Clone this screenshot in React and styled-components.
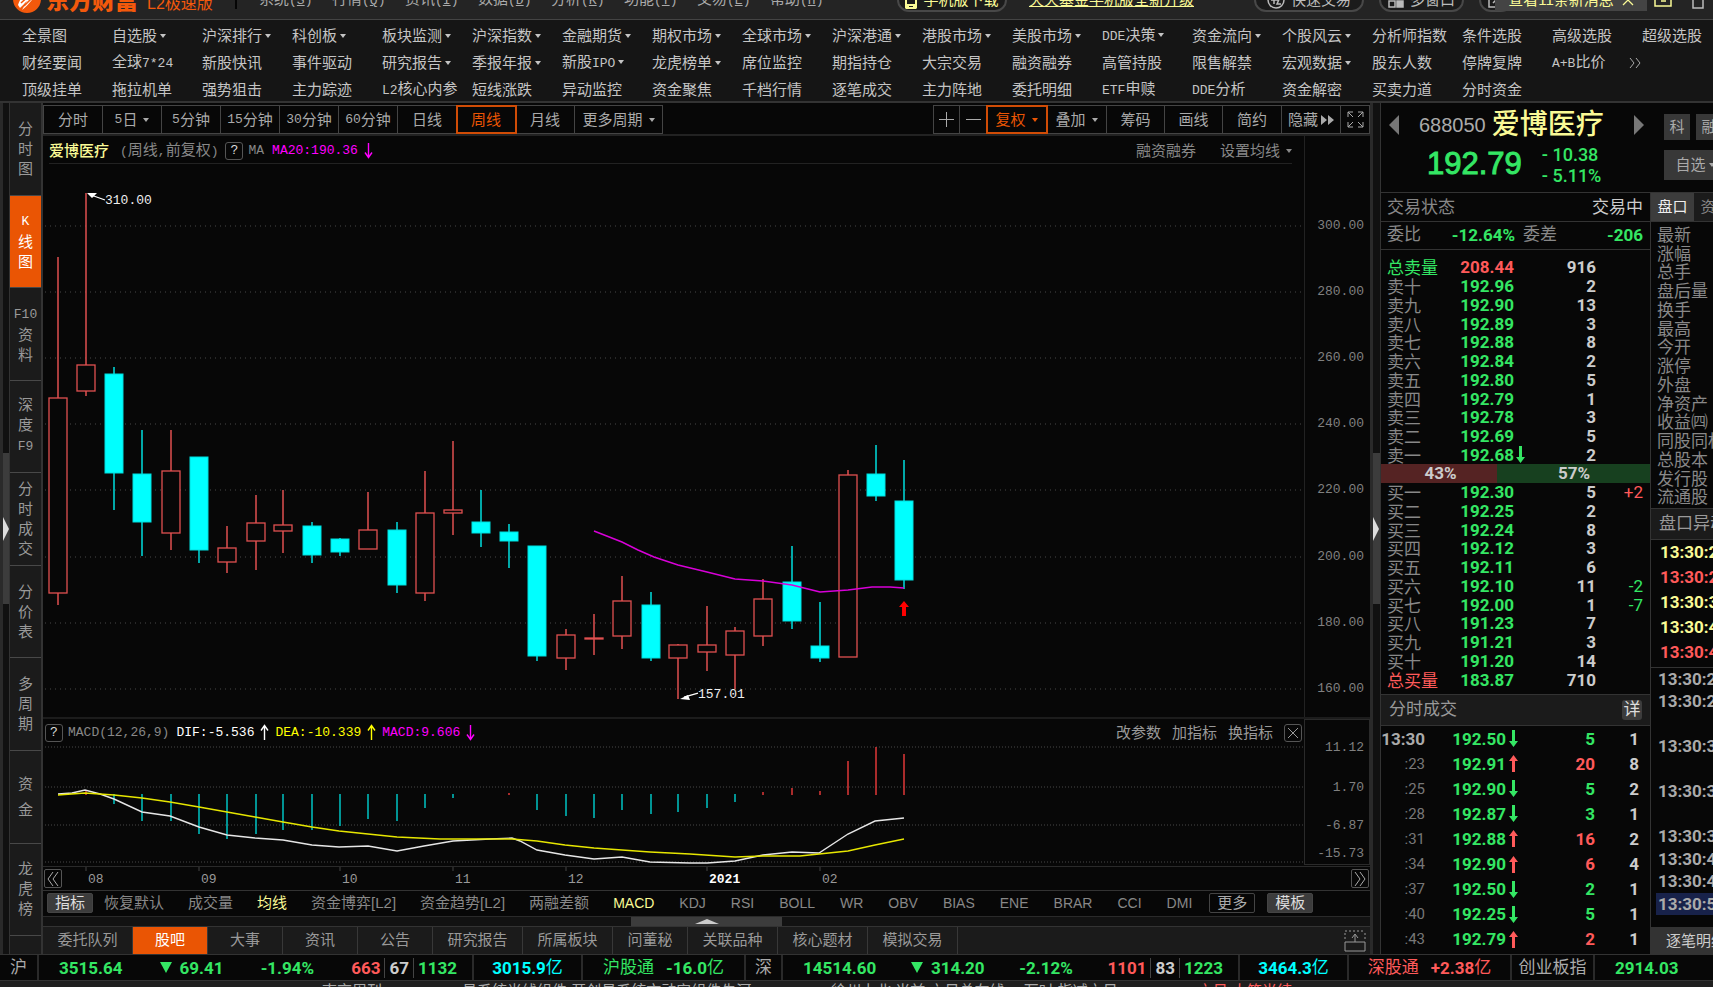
import React, { useState } from "react";
import styled, { createGlobalStyle } from "styled-components";

const CJK = `"Noto Sans CJK SC", sans-serif`;

const menuRows = [
  [
    "全景图",
    "自选股▾",
    "沪深排行▾",
    "科创板▾",
    "板块监测▾",
    "沪深指数▾",
    "金融期货▾",
    "期权市场▾",
    "全球市场▾",
    "沪深港通▾",
    "港股市场▾",
    "美股市场▾",
    "DDE决策▾",
    "资金流向▾",
    "个股风云▾",
    "分析师指数",
    "条件选股",
    "高级选股",
    "超级选股",
  ],
  [
    "财经要闻",
    "全球7*24",
    "新股快讯",
    "事件驱动",
    "研究报告▾",
    "季报年报▾",
    "新股IPO▾",
    "龙虎榜单▾",
    "席位监控",
    "期指持仓",
    "大宗交易",
    "融资融券",
    "高管持股",
    "限售解禁",
    "宏观数据▾",
    "股东人数",
    "停牌复牌",
    "A+B比价",
  ],
  [
    "顶级挂单",
    "拖拉机单",
    "强势狙击",
    "主力踪迹",
    "L2核心内参",
    "短线涨跌",
    "异动监控",
    "资金聚焦",
    "千档行情",
    "逐笔成交",
    "主力阵地",
    "委托明细",
    "ETF申赎",
    "DDE分析",
    "资金解密",
    "买卖力道",
    "分时资金",
  ],
];

const topMenu = [
  ["系统", "S"],
  ["行情", "Q"],
  ["资讯", "I"],
  ["数据", "D"],
  ["分析", "K"],
  ["功能", "T"],
  ["交易", "E"],
  ["帮助", "H"],
];

const sideTabs = [
  ["分", "时", "图"],
  ["K", "线", "图"],
  ["F10", "资", "料"],
  ["深", "度", "F9"],
  ["分", "时", "成", "交"],
  ["分", "价", "表"],
  ["多", "周", "期"],
  ["资", "金"],
  ["龙", "虎", "榜"],
];

const periods = ["分时", "5日▾", "5分钟", "15分钟", "30分钟", "60分钟", "日线", "周线", "月线", "更多周期▾"];

const indicators = ["恢复默认", "成交量", "均线", "资金博弈[L2]", "资金趋势[L2]", "两融差额", "MACD", "KDJ", "RSI", "BOLL", "WR", "OBV", "BIAS", "ENE", "BRAR", "CCI", "DMI"];

const bottomTabs = ["委托队列", "股吧", "大事", "资讯", "公告", "研究报告", "所属板块", "问董秘", "关联品种", "核心题材", "模拟交易"];

// x, high, body top, body bottom, low, rising
const candles = [
  [58, 257, 398, 593, 605, 1],
  [86, 193, 365, 391, 396, 1],
  [114, 367, 374, 473, 510, 0],
  [142, 430, 474, 522, 556, 0],
  [171, 430, 471, 533, 550, 1],
  [199, 457, 457, 550, 563, 0],
  [227, 526, 548, 562, 573, 1],
  [256, 495, 523, 541, 570, 1],
  [283, 490, 525, 531, 553, 1],
  [312, 522, 526, 555, 563, 0],
  [340, 538, 539, 552, 556, 0],
  [368, 492, 530, 549, 549, 1],
  [397, 522, 530, 585, 593, 0],
  [425, 471, 513, 593, 601, 1],
  [453, 441, 510, 513, 535, 1],
  [481, 490, 522, 533, 547, 0],
  [509, 524, 532, 541, 568, 0],
  [537, 546, 546, 656, 661, 0],
  [566, 629, 635, 658, 670, 1],
  [594, 614, 638, 639, 655, 1],
  [622, 576, 601, 636, 649, 1],
  [651, 592, 605, 658, 661, 0],
  [678, 644, 645, 658, 699, 1],
  [707, 606, 645, 652, 671, 1],
  [735, 627, 631, 655, 689, 1],
  [763, 579, 599, 636, 646, 1],
  [792, 546, 582, 621, 629, 0],
  [820, 602, 646, 658, 662, 0],
  [848, 470, 475, 657, 657, 1],
  [876, 445, 474, 496, 501, 0],
  [904, 460, 501, 580, 589, 0],
];

const priceGrid = [
  [226, "300.00"],
  [292, "280.00"],
  [358, "260.00"],
  [424, "240.00"],
  [490, "220.00"],
  [557, "200.00"],
  [623, "180.00"],
  [689, "160.00"],
];

// x, end of the bar
const macdBars = [
  [86, 791],
  [114, 805],
  [142, 822],
  [171, 822],
  [199, 835],
  [227, 840],
  [256, 835],
  [283, 831],
  [312, 831],
  [340, 827],
  [368, 820],
  [397, 822],
  [425, 809],
  [453, 799],
  [509, 794],
  [537, 811],
  [566, 817],
  [594, 819],
  [622, 811],
  [651, 815],
  [678, 813],
  [707, 809],
  [735, 803],
  [763, 793],
  [792, 789],
  [820, 792],
  [848, 762],
  [876, 748],
  [904, 755],
];

const maLine =
  "594,531 622,542 638,550 654,557 678,565 707,572 735,579 763,581 792,585 820,592 848,590 872,587 890,587 904,588";
const difLine =
  "58,795 72,794 85,791 100,795 114,800 142,813 170,817 199,828 227,836 255,839 283,841 312,846 339,848 368,847 397,852 424,847 453,842 490,840 512,839 520,842 537,851 565,856 594,860 622,858 650,863 690,864 707,864 735,862 763,856 792,853 819,854 848,835 875,822 904,819";
const deaLine =
  "58,796 85,794 114,796 142,799 170,803 199,808 227,813 255,818 283,823 312,828 339,832 368,835 397,838 440,840 512,840 537,842 565,846 594,849 650,853 690,855 735,858 763,857 800,857 819,855 848,852 875,846 904,840";

const dates = [
  [86, "08"],
  [199, "09"],
  [340, "10"],
  [453, "11"],
  [566, "12"],
  [707, "2021"],
  [820, "02"],
];

const sells = [
  ["总卖量", "208.44", "916"],
  ["卖十", "192.96", "2"],
  ["卖九", "192.90", "13"],
  ["卖八", "192.89", "3"],
  ["卖七", "192.88", "8"],
  ["卖六", "192.84", "2"],
  ["卖五", "192.80", "5"],
  ["卖四", "192.79", "1"],
  ["卖三", "192.78", "3"],
  ["卖二", "192.69", "5"],
  ["卖一", "192.68", "2"],
];

const buys = [
  ["买一", "192.30", "5", "+2"],
  ["买二", "192.25", "2"],
  ["买三", "192.24", "8"],
  ["买四", "192.12", "3"],
  ["买五", "192.11", "6"],
  ["买六", "192.10", "11", "-2"],
  ["买七", "192.00", "1", "-7"],
  ["买八", "191.23", "7"],
  ["买九", "191.21", "3"],
  ["买十", "191.20", "14"],
  ["总买量", "183.87", "710"],
];

const ticks = [
  ["13:30", "192.50", 0, "5", "1"],
  [":23", "192.91", 1, "20", "8"],
  [":25", "192.90", 0, "5", "2"],
  [":28", "192.87", 0, "3", "1"],
  [":31", "192.88", 1, "16", "2"],
  [":34", "192.90", 1, "6", "4"],
  [":37", "192.50", 0, "2", "1"],
  [":40", "192.25", 0, "5", "1"],
  [":43", "192.79", 1, "2", "1"],
];

const quoteLabels = ["最新", "涨幅", "总手", "盘后量", "换手", "最高", "今开", "涨停", "外盘", "净资产", "收益㈣", "同股同权", "总股本", "发行股", "流通股"];

const alerts = [
  ["13:30:2", "#fafa96"],
  ["13:30:2", "#ff5a5a"],
  ["13:30:3", "#fafa96"],
  ["13:30:4", "#fafa96"],
  ["13:30:4", "#ff5a5a"],
];

const trades = ["13:30:2", "13:30:2", "", "13:30:3", "", "13:30:3", "", "13:30:3", "13:30:4", "13:30:4", "13:30:5"];

// Latin runs are set in the half width face, ▾ becomes a small caret
function Mixed({ children }) {
  return children.split(/([\x21-\x7e]+|▾)/).map((part, i) => {
    if (part === "▾") return <Caret key={i} />;
    return i % 2 ? <Half key={i}>{part}</Half> : part;
  });
}

function ThinArrow({ up, color }) {
  return (
    <svg width="9" height="17" viewBox="0 0 9 17" fill="none" stroke={color} strokeWidth="1.4">
      <path d={up ? "M4.500 16V2M1 6.500L4.500 1.500L8 6.500" : "M4.500 1V15M1 10.500L4.500 15.500L8 10.500"} />
    </svg>
  );
}

function PriceArrow({ up }) {
  return (
    <svg width="9" height="17" viewBox="0 0 9 17" fill={up ? "#ff5a5a" : "#34e664"}>
      <path d={up ? "M4.500 0L9 6H6V17H3V6H0Z" : "M4.500 17L9 11H6V0H3V11H0Z"} />
    </svg>
  );
}

function TitleBar() {
  return (
    <TitleBarStyle>
      <div className="inner">
        <svg className="logo" width="28" height="28" viewBox="0 0 28 28">
          <circle cx="14" cy="14" r="14" fill="#f3590c" />
          <path d="M5 20C7 13 11 9 19 3L22 7L24 9C19 14 16 20 9 25C12 20 13 18 14 16C11 19 9 21 7 23Z" fill="#fff" />
          <path d="M8 18L19 8M11 21L21 11" stroke="#f3590c" strokeWidth="1.5" />
        </svg>
        <strong className="brand">东方财富</strong>
        <span className="edition">L2极速版</span>
        <i className="split" />
        <nav>
          {topMenu.map(([text, key]) => (
            <button key={key}>
              {text}
              <Half>
                (<u>{key}</u>)
              </Half>
            </button>
          ))}
        </nav>
        <div className="tools">
          <Pill $yellow $width={110}>
            <svg width="12" height="18" viewBox="0 0 12 18" fill="#fafa96">
              <path fillRule="evenodd" d="M1 0H11L12 1V17L11 18H1L0 17V1ZM2 2V13H10V2ZM4 15V16H8V15Z" />
            </svg>
            手机版下载
          </Pill>
          <a href="#fund">天天基金手机版全新升级</a>
          <Pill $width={110}>
            <svg width="18" height="18" viewBox="0 0 18 18" fill="none" stroke="#bbb" strokeWidth="1.5">
              <circle cx="9" cy="9" r="8" />
              <path d="M4 9H11M7 5V13M13 6L10 13H14" />
            </svg>
            快速交易
          </Pill>
          <Pill $width={85}>
            <svg width="16" height="16" viewBox="0 0 16 16" fill="none" stroke="#bbb" strokeWidth="1.5">
              <path d="M1 1H7V7H1ZM1 9H7V15H1Z" />
              <path d="M9 1H15V7H9ZM9 9H15V15H9Z" fill="#bbb" />
            </svg>
            多窗口
          </Pill>
          <Pill $width={34}>
            <svg width="16" height="16" viewBox="0 0 16 16" fill="none" stroke="#bbb" strokeWidth="1.5">
              <path d="M8 1H1V15H8M5 11L14 2" />
            </svg>
          </Pill>
          <button className="news">
            查看11条新消息
            <svg width="12" height="12" viewBox="0 0 12 12" stroke="#fafa96" strokeWidth="1.3">
              <path d="M1 1L11 11M11 1L1 11" />
            </svg>
          </button>
          <svg className="box_icon" width="18" height="18" viewBox="0 0 18 18" fill="none" stroke="#fafa96" strokeWidth="1.5">
            <path d="M1 1H17V17H1ZM7 12H12" />
          </svg>
          <svg className="up_icon" width="20" height="20" viewBox="0 0 20 20" fill="none" stroke="#bbb" strokeWidth="1.5">
            <path d="M10 1L19 10H15V19H5V10H1Z" />
          </svg>
        </div>
      </div>
    </TitleBarStyle>
  );
}

function PriceChart() {
  return (
    <PlotRow>
      <svg className="plot" width="100%" height="100%">
        <g transform="translate(-43 -164)">
          {priceGrid.map(([y]) => (
            <line key={y} x1="45" x2="1303" y1={y} y2={y} className="grid" />
          ))}
          {candles.map(([x, high, top, bottom, low, rising]) => (
            <g key={x} stroke={rising ? "#e05050" : "#00dede"} fill={rising ? "#070707" : "#00ffff"}>
              <path d={`M${x} ${high}V${top}M${x} ${bottom}V${low}`} strokeWidth="1.5" />
              <rect x={x - 9} y={top} width="18" height={bottom - top} strokeWidth={rising ? 1.3 : 1} />
            </g>
          ))}
          <polyline points={maLine} fill="none" stroke="#d800d8" strokeWidth="1.5" />
          <path d="M904 601L909 607H906V616H902V607H899Z" fill="#f00" />
          <path d="M91 195L105 200M684 697L698 693" stroke="#fff" strokeWidth="1.3" />
          <path d="M87 193L97 193L92 198ZM680 699L688 695L690 700Z" fill="#fff" />
          <text x="105" y="204">310.00</text>
          <text x="698" y="698">157.01</text>
        </g>
      </svg>
      <svg className="axis" width="66" height="100%">
        {priceGrid.map(([y, label]) => (
          <text key={y} x="59" y={y - 161} textAnchor="end">
            {label}
          </text>
        ))}
      </svg>
    </PlotRow>
  );
}

function MacdChart() {
  return (
    <MacdStyle>
      <div className="head">
        <HelpBox>?</HelpBox>
        <Half className="grey">MACD(12,26,9)</Half>
        <Half className="white">DIF:-5.536</Half>
        <ThinArrow up color="#fff" />
        <Half className="yellow">DEA:-10.339</Half>
        <ThinArrow up color="#ff0" />
        <Half className="magenta">MACD:9.606</Half>
        <ThinArrow color="#f0f" />
        <div className="actions">
          <button>改参数</button>
          <button>加指标</button>
          <button>换指标</button>
          <button className="close" aria-label="关闭">
            <svg width="10" height="12" viewBox="0 0 10 12" stroke="#999">
              <path d="M0 1L10 11M10 1L0 11" />
            </svg>
          </button>
        </div>
      </div>
      <svg className="plot" width="100%" height="147">
        <g transform="translate(-43 -720)">
          {[748, 788, 826, 863].map((y) => (
            <line key={y} x1="45" x2="1303" y1={y} y2={y} className="grid" />
          ))}
          {macdBars.map(([x, end]) => (
            <line key={x} x1={x} x2={x} y1={end < 795 ? 796 : 795} y2={end} stroke={end < 795 ? "#e03838" : "#00c4c4"} strokeWidth="1.5" />
          ))}
          <polyline points={difLine} fill="none" stroke="#e6e6e6" strokeWidth="1.4" />
          <polyline points={deaLine} fill="none" stroke="#e6e600" strokeWidth="1.4" />
        </g>
      </svg>
      <svg className="axis" width="66" height="146">
        <text x="59" y="31" textAnchor="end">11.12</text>
        <text x="59" y="71" textAnchor="end">1.70</text>
        <text x="59" y="109" textAnchor="end">-6.87</text>
        <text x="59" y="137" textAnchor="end">-15.73</text>
      </svg>
    </MacdStyle>
  );
}

function OrderRow({ row, totalColor, priceColor = "#34e664", arrow }) {
  const [label, price, volume, diff] = row;
  return (
    <tr>
      <td className="label" style={{ color: totalColor }}>
        {label}
      </td>
      <td className="price" style={{ color: priceColor }}>
        {price}
      </td>
      <td className="arrow">{arrow && <PriceArrow />}</td>
      <td className="volume">{volume}</td>
      <td className={`diff ${diff && diff[0] === "+" ? "up" : ""}`}>{diff}</td>
    </tr>
  );
}

function QuotePanel() {
  return (
    <QuoteStyle>
      <header>
        <button className="prev" aria-label="上一只" />
        <div className="stock">
          <div className="title">
            <span className="code">688050</span>
            <h1>爱博医疗</h1>
          </div>
          <div className="now">
            <span className="last">192.79</span>
            <span className="change">
              <span>- 10.38</span>
              <span>- 5.11%</span>
            </span>
          </div>
        </div>
        <button className="next" aria-label="下一只" />
        <div className="tags">
          <button className="tag">科</button>
          <button className="tag">融</button>
          <button className="fav">
            <Mixed>自选▾</Mixed>
          </button>
        </div>
      </header>
      <div className="columns">
        <div className="book_column">
          <div className="status">
            <span>交易状态</span>
            <b>交易中</b>
          </div>
          <div className="ratio">
            <span>委比</span>
            <Num className="first">-12.64%</Num>
            <span>委差</span>
            <Num className="second">-206</Num>
          </div>
          <OrderBook>
            <tbody>
              {sells.map((row, i) => (
                <OrderRow
                  key={row[0]}
                  row={row}
                  totalColor={i === 0 ? "#34e664" : undefined}
                  priceColor={i === 0 ? "#ff5a5a" : undefined}
                  arrow={i === 10}
                />
              ))}
              <tr className="power">
                <td>43%</td>
                <td>57%</td>
              </tr>
              {buys.map((row, i) => (
                <OrderRow key={row[0]} row={row} totalColor={i === 10 ? "#ff5a5a" : undefined} />
              ))}
            </tbody>
          </OrderBook>
          <SectionHead>
            分时成交<button>详</button>
          </SectionHead>
          <TickTable>
            <tbody>
              {ticks.map(([time, price, up, volume, count], i) => (
                <tr key={time}>
                  <td className={i ? "time" : "time full"}>{time}</td>
                  <td className="price">{price}</td>
                  <td className="arrow">
                    <PriceArrow up={up} />
                  </td>
                  <td className={`volume ${up ? "up" : ""}`}>{volume}</td>
                  <td className="count">{count}</td>
                </tr>
              ))}
            </tbody>
          </TickTable>
        </div>
        <div className="info_column">
          <div className="tabs">
            <button className="active">盘口</button>
            <button>资金</button>
          </div>
          <ul className="labels">
            {quoteLabels.map((item) => (
              <li key={item}>{item}</li>
            ))}
          </ul>
          <SectionHead>盘口异动</SectionHead>
          <ul className="alerts">
            {alerts.map(([time, color], i) => (
              <li key={i} style={{ color }}>
                {time}
              </li>
            ))}
          </ul>
          <ul className="trades">
            {trades.map((time, i) => (
              <li key={i} className={i === trades.length - 1 ? "selected" : ""}>
                {time}
              </li>
            ))}
          </ul>
          <button className="detail">逐笔明细</button>
        </div>
      </div>
    </QuoteStyle>
  );
}

function MarketCells({ name, index, change, percent, counts, amount, connect, flow, up }) {
  return (
    <>
      <Cell $width={name === "沪" ? 39 : 37}>{name}</Cell>
      <Cell $width={name === "沪" ? 435 : 457} $spread>
        <Num>{index}</Num>
        <Num className="drop">
          <i />
          {change}
        </Num>
        <Num>{percent}</Num>
        <Num className="counts">
          <span className="up">{counts[0]}</span>
          <span className="flat">{counts[1]}</span>
          <span>{counts[2]}</span>
        </Num>
      </Cell>
      <Cell $width={109} $color="#00ffff">
        <Num>{amount}</Num>亿
      </Cell>
      <Cell $width={163} $color={up ? "#ff5a5a" : "#34e664"}>
        {connect}
        <Num className="flow">{flow}</Num>亿
      </Cell>
    </>
  );
}

function App() {
  const [period, setPeriod] = useState("周线");
  const [side, setSide] = useState(1);
  const [tab, setTab] = useState("股吧");

  return (
    <Page>
      <GlobalStyle />
      <TitleBar />
      <MenuGrid>
        {menuRows.map((row, i) => (
          <div className="menu_row" key={i}>
            {row.map((item) => (
              <button key={item}>
                <Mixed>{item}</Mixed>
              </button>
            ))}
            {i === 1 && (
              <button className="more" aria-label="更多">
                <svg width="12" height="10" viewBox="0 0 12 10" fill="none" stroke="#aaa">
                  <path d="M1 0L5 5L1 10M7 0L11 5L7 10" />
                </svg>
              </button>
            )}
          </div>
        ))}
      </MenuGrid>
      <Main>
        <Rail $width={10}>
          <i className="thumb" />
        </Rail>
        <SideBar>
          {sideTabs.map((chars, i) => (
            <SideTab key={i} $active={side === i} $wide={chars.length === 2} onClick={() => setSide(i)}>
              {chars.map((c) => (
                <span key={c}>
                  <Mixed>{c}</Mixed>
                </span>
              ))}
            </SideTab>
          ))}
          <div className="rest" />
        </SideBar>
        <ChartPanel>
          <Toolbar>
            <div className="group">
              {periods.map((item) => (
                <ToolButton
                  key={item}
                  $width={item === "更多周期▾" ? 87 : 59}
                  $active={period === item}
                  onClick={() => setPeriod(item)}
                >
                  <Mixed>{item}</Mixed>
                </ToolButton>
              ))}
            </div>
            <div className="group">
              <ToolButton $width={26} aria-label="放大">
                <svg width="15" height="15" viewBox="0 0 15 15" stroke="#aaa">
                  <path d="M0 7.500H15M7.500 0V15" />
                </svg>
              </ToolButton>
              <ToolButton $width={27} aria-label="缩小">
                <svg width="15" height="15" viewBox="0 0 15 15" stroke="#aaa">
                  <path d="M0 7.500H15" />
                </svg>
              </ToolButton>
              <ToolButton $width={60} $active>
                <Mixed>复权▾</Mixed>
              </ToolButton>
              <ToolButton $width={60}>
                <Mixed>叠加▾</Mixed>
              </ToolButton>
              <ToolButton $width={58}>筹码</ToolButton>
              <ToolButton $width={58}>画线</ToolButton>
              <ToolButton $width={59}>简约</ToolButton>
              <ToolButton $width={59}>
                隐藏
                <svg className="after" width="13" height="10" viewBox="0 0 13 10" fill="#aaa">
                  <path d="M0 0L6 5L0 10ZM7 0L13 5L7 10Z" />
                </svg>
              </ToolButton>
              <ToolButton $width={28} aria-label="全屏">
                <svg width="17" height="17" viewBox="0 0 17 17" fill="none" stroke="#aaa">
                  <path d="M1 6V1H6M11 1H16V6M16 11V16H11M6 16H1V11M1 1L6 6M16 1L11 6M16 16L11 11M1 16L6 11" />
                </svg>
              </ToolButton>
            </div>
          </Toolbar>
          <ChartHead>
            <div className="title">
              <strong>爱博医疗</strong>
              <span className="mode">
                <Mixed>(周线,前复权)</Mixed>
              </span>
              <HelpBox>?</HelpBox>
              <Half className="ma">MA</Half>
              <Half className="ma20">MA20:190.36</Half>
              <ThinArrow color="#f0f" />
              <div className="links">
                <button>融资融券</button>
                <button>
                  <Mixed>设置均线▾</Mixed>
                </button>
              </div>
            </div>
            <div className="axis_head" />
          </ChartHead>
          <PriceChart />
          <MacdChart />
          <DateAxis>
            <button aria-label="向前">
              <svg width="12" height="14" viewBox="0 0 12 14" fill="none" stroke="#aaa">
                <path d="M6 0L1 7L6 14M11 0L6 7L11 14" />
              </svg>
            </button>
            <svg className="scale" height="23">
              <g transform="translate(-62 0)">
                {dates.map(([x, label]) => (
                  <g key={x}>
                    <path d={`M${x} 0V4`} stroke="#444" />
                    <text x={x + 2} y="16" className={label === "2021" ? "year" : ""}>
                      {label}
                    </text>
                  </g>
                ))}
              </g>
            </svg>
            <button aria-label="向后">
              <svg width="12" height="14" viewBox="0 0 12 14" fill="none" stroke="#aaa">
                <path d="M1 0L6 7L1 14M6 0L11 7L6 14" />
              </svg>
            </button>
          </DateAxis>
          <IndicatorBar>
            <button className="solid">指标</button>
            <div className="items">
              {indicators.map((item) => (
                <IndicatorButton key={item} $latin={/^[A-Z]+$/.test(item)} $active={item === "均线" || item === "MACD"}>
                  {item}
                </IndicatorButton>
              ))}
            </div>
            <button className="outline">更多</button>
            <button className="solid">模板</button>
          </IndicatorBar>
          <ScrollStrip>
            <div className="thumb">
              <i />
            </div>
          </ScrollStrip>
          <BottomTabs>
            {bottomTabs.map((item) => (
              <BottomTab key={item} $active={tab === item} $width={item.length > 3 ? 90 : 75} onClick={() => setTab(item)}>
                {item}
              </BottomTab>
            ))}
            <svg width="22" height="22" viewBox="0 0 22 22" fill="none" stroke="#999">
              <path d="M1 1H21M1 3V11M21 3V11" strokeDasharray="2 2" />
              <path d="M1 12H21V21H1ZM11 12V5M8 8L11 4L14 8" />
            </svg>
          </BottomTabs>
        </ChartPanel>
        <Rail $width={11}>
          <i className="thumb" />
        </Rail>
        <QuotePanel />
      </Main>
      <Ticker>
        <MarketCells name="沪" index="3515.64" change="69.41" percent="-1.94%" counts={[663, 67, 1132]} amount="3015.9" connect="沪股通" flow="-16.0" />
        <MarketCells name="深" index="14514.60" change="314.20" percent="-2.12%" counts={[1101, 83, 1223]} amount="3464.3" connect="深股通" flow="+2.38" up />
        <Cell $width={83}>创业板指</Cell>
        <Cell className="last">
          <Num>2914.03</Num>
        </Cell>
      </Ticker>
      <NewsStrip>
        <span>南京周刊</span>
        <span>易系统光线组件 开创易系统市动安组件先河</span>
        <span>徐州上北 当前 六日总在线 一万时 指减六日</span>
        <span className="red">六日 大笔当结</span>
      </NewsStrip>
    </Page>
  );
}

const GlobalStyle = createGlobalStyle`
  * {
    box-sizing: border-box;
  }
  body {
    margin: 0;
    background-color: #070707;
    color: #aaa;
    font-family: "Liberation Sans", ${CJK};
    font-size: 15px;
    line-height: 20px;
  }
  button {
    background: none;
    border: none;
    padding: 0;
    color: inherit;
    font: inherit;
    cursor: pointer;
    white-space: nowrap;
  }
  ul {
    margin: 0;
    padding: 0;
    list-style: none;
  }
  table {
    border-collapse: collapse;
  }
  td {
    padding: 0;
  }
  text {
    font-family: "Liberation Mono", monospace;
    font-size: 13px;
  }
`;

const Page = styled.div`
  height: 100vh;
  display: flex;
  flex-direction: column;
  overflow: hidden;
`;

const Half = styled.span`
  font-family: "Liberation Mono", monospace;
  font-size: 13px;
`;

const Num = styled.span`
  font-family: Roboto, sans-serif;
  font-size: 17px;
  font-weight: 700;
  color: #34e664;
`;

const Caret = styled.i`
  display: inline-block;
  margin-left: 3px;
  vertical-align: 3px;
  border: 3px solid transparent;
  border-top: 4px solid currentColor;
  border-bottom: none;
`;

const HelpBox = styled.button`
  width: 18px;
  height: 18px;
  border: 1px solid #555;
  border-radius: 3px;
  color: #ddd;
  font-family: "Liberation Mono", monospace;
  font-size: 13px;
  line-height: 16px;
`;

const Pill = styled.button`
  display: flex;
  align-items: center;
  justify-content: center;
  gap: 6px;
  width: ${({ $width }) => $width}px;
  height: 24px;
  border: 2px solid #484848;
  border-radius: 12px;
  background-color: #1b1b1b;
  color: ${({ $yellow }) => ($yellow ? "#fafa96" : "#bbb")};
`;

const TitleBarStyle = styled.div`
  display: flex;
  align-items: flex-end;
  flex: none;
  height: 20px;
  overflow: hidden;
  background-color: #242424;
  border-bottom: 1px solid #444;
  .inner {
    display: flex;
    align-items: center;
    width: 100%;
    height: 38px;
    padding-left: 13px;
  }
  .logo {
    margin-bottom: 2px;
  }
  .brand {
    margin-left: 5px;
    padding-top: 2px;
    color: #f3590c;
    font-size: 23px;
    font-weight: 900;
  }
  .edition {
    margin-left: 9px;
    padding-top: 8px;
    width: 68px;
    color: #f3590c;
    font-size: 16px;
    white-space: nowrap;
  }
  .split {
    height: 18px;
    margin-left: 20px;
    border-left: 2px solid #050505;
  }
  nav {
    display: flex;
    margin-left: 22px;
    button {
      width: 73px;
      text-align: left;
    }
  }
  .tools {
    display: flex;
    align-items: center;
    margin-left: auto;
    padding-right: 5px;
    a {
      margin: 0 60px 0 22px;
      color: #fafa96;
      white-space: nowrap;
    }
    ${Pill} + ${Pill} {
      margin-left: 15px;
    }
  }
  .news {
    display: flex;
    align-items: center;
    justify-content: center;
    gap: 8px;
    width: 152px;
    height: 22px;
    margin-left: -18px;
    background-color: #444;
    color: #fafa96;
  }
  .box_icon {
    margin: 0 0 4px 7px;
  }
  .up_icon {
    margin: 0 0 2px 16px;
  }
`;

const MenuGrid = styled.nav`
  flex: none;
  display: grid;
  grid-template-rows: 26px 27px 27px;
  height: 83px;
  padding: 2px 0 0 22px;
  background-color: #151515;
  border-bottom: 2px solid #333;
  color: #c4c4c4;
  .menu_row {
    display: flex;
    align-items: center;
    padding-top: 2px;
    button {
      flex: 1 0 90px;
      max-width: 90px;
      text-align: left;
    }
    .more {
      margin-left: -13px;
    }
  }
`;

const Main = styled.main`
  display: flex;
  flex: 1;
  min-height: 0;
`;

const Rail = styled.div`
  flex: none;
  display: flex;
  align-items: center;
  width: ${({ $width }) => $width}px;
  background-color: #111;
  border-left: 3px solid #2a2a2a;
  border-right: 1px solid #333;
  .thumb {
    display: flex;
    align-items: center;
    width: 100%;
    height: 151px;
    background-color: #3c3c3c;
    &::before {
      content: "";
      border: 12px solid transparent;
      border-left: 6px solid #ddd;
      border-right: none;
    }
  }
`;

const SideBar = styled.nav`
  flex: none;
  display: flex;
  flex-direction: column;
  width: 33px;
  background-color: #1b1b1b;
  border-right: 2px solid #333;
  .rest {
    height: 18px;
  }
`;

const SideTab = styled.button`
  flex: 1;
  display: flex;
  flex-direction: column;
  align-items: center;
  justify-content: center;
  gap: ${({ $wide }) => ($wide ? 6 : 0)}px;
  border-bottom: 1px solid #484848;
  background-color: ${({ $active }) => ($active ? "#ea5504" : "transparent")};
  color: ${({ $active }) => ($active ? "#fff" : "#999")};
`;

const ChartPanel = styled.section`
  flex: 1;
  display: flex;
  flex-direction: column;
  min-width: 0;
`;

const Toolbar = styled.div`
  display: flex;
  justify-content: space-between;
  height: 33px;
  padding-top: 2px;
  border-bottom: 2px solid #222;
  .group {
    display: flex;
    height: 29px;
    border: 1px solid #444;
  }
`;

const ToolButton = styled.button`
  width: ${({ $width }) => $width}px;
  display: flex;
  align-items: center;
  justify-content: center;
  border-right: 1px solid #444;
  color: #aaa;
  white-space: nowrap;
  .after {
    margin-left: 3px;
  }
  ${Caret} {
    margin-left: 6px;
  }
  &:last-child {
    border-right: none;
  }
  ${({ $active }) =>
    $active &&
    `
    outline: 2px solid #d04c06;
    outline-offset: -1px;
    color: #ea5504;
  `}
`;

const ChartHead = styled.div`
  display: grid;
  grid-template-columns: minmax(0, 1fr) 66px;
  .title {
    display: flex;
    align-items: center;
    height: 28px;
    padding-top: 2px;
    margin: 0 12px 0 6px;
    border-bottom: 1px solid #222;
  }
  .axis_head {
    border-left: 1px solid #222;
  }
  strong {
    color: #fafa96;
    font-weight: 500;
  }
  .mode {
    margin: 0 7px 0 11px;
    color: #888;
  }
  .ma {
    margin: 0 8px 0 5px;
    color: #888;
  }
  .ma20 {
    margin-right: 6px;
    color: #f0f;
  }
  .links {
    display: flex;
    gap: 24px;
    margin-left: auto;
    color: #888;
    ${Caret} {
      margin-left: 6px;
    }
  }
`;

const PlotRow = styled.div`
  flex: 1;
  display: grid;
  grid-template-columns: minmax(0, 1fr) 66px;
  min-height: 0;
  border-bottom: 2px solid #1c1c1c;
  .grid {
    stroke: #484848;
    stroke-dasharray: 1 4;
  }
  .plot text {
    fill: #eee;
  }
  .axis {
    border-left: 1px solid #222;
    text {
      fill: #808080;
    }
  }
`;

const MacdStyle = styled.div`
  display: grid;
  grid-template-columns: minmax(0, 1fr) 66px;
  height: 148px;
  border-bottom: 1px solid #2a2a2a;
  .head,
  .plot {
    grid-area: 1 / 1;
  }
  .head {
    display: flex;
    align-items: center;
    align-self: start;
    height: 27px;
    padding-left: 2px;
    white-space: nowrap;
    > svg {
      margin: 0 6px;
    }
  }
  .grey {
    margin: 0 7px 0 5px;
    color: #888;
  }
  .white {
    color: #fff;
  }
  .yellow {
    color: #ff0;
  }
  .magenta {
    color: #f0f;
  }
  .actions {
    display: flex;
    align-items: center;
    gap: 11px;
    margin-left: auto;
    padding-right: 2px;
    color: #999;
  }
  .close {
    display: flex;
    align-items: center;
    justify-content: center;
    width: 18px;
    height: 18px;
    border: 1px solid #555;
    border-radius: 3px;
  }
  .grid {
    stroke: #484848;
    stroke-dasharray: 1 2;
  }
  .axis {
    border: 1px solid #2a2a2a;
    text {
      fill: #808080;
    }
  }
`;

const DateAxis = styled.div`
  display: flex;
  align-items: center;
  height: 24px;
  padding: 0 1px;
  border-bottom: 1px solid #333;
  .scale {
    flex: 1;
    align-self: flex-start;
  }
  text {
    fill: #999;
  }
  .year {
    fill: #fff;
    font-weight: 700;
  }
  button {
    display: flex;
    align-items: center;
    justify-content: center;
    width: 18px;
    height: 19px;
    border: 1px solid #555;
    border-radius: 2px;
  }
`;

const IndicatorBar = styled.div`
  display: flex;
  align-items: center;
  height: 26px;
  padding: 0 0 1px 4px;
  border-bottom: 1px solid #2a2a2a;
  color: #888;
  .items {
    display: flex;
    gap: 24px;
    margin: 0 16px 0 11px;
  }
  .solid,
  .outline {
    width: 46px;
    height: 20px;
    line-height: 18px;
    border-radius: 2px;
    border: 1px solid #444;
    color: #ddd;
  }
  .solid {
    background-color: #3c3c3c;
  }
  .outline {
    margin-right: 12px;
    color: #aaa;
  }
`;

const IndicatorButton = styled.button`
  color: ${({ $active }) => ($active ? "#fafa96" : "inherit")};
  ${({ $latin }) =>
    $latin &&
    `
    padding-right: 1px;
    font-size: 14px;
  `}
`;

const ScrollStrip = styled.div`
  display: flex;
  justify-content: center;
  height: 9px;
  background-color: #121212;
  .thumb {
    display: flex;
    align-items: center;
    justify-content: center;
    width: 151px;
    background-color: #3c3c3c;
  }
  i {
    border: 12px solid transparent;
    border-bottom: 5px solid #ccc;
    border-top: none;
  }
`;

const BottomTabs = styled.nav`
  display: flex;
  align-items: center;
  height: 28px;
  background-color: #1b1b1b;
  border-top: 1px solid #333;
  svg {
    margin: 0 4px 0 auto;
  }
`;

const BottomTab = styled.button`
  width: ${({ $width }) => $width}px;
  height: 100%;
  padding-bottom: 2px;
  border-right: 1px solid #383838;
  background-color: ${({ $active }) => ($active ? "#ea5504" : "transparent")};
  color: ${({ $active }) => ($active ? "#fff" : "#999")};
`;

const SectionHead = styled.div`
  flex: none;
  display: flex;
  align-items: center;
  justify-content: space-between;
  height: 32px;
  padding: 0 8px;
  background-color: #1b1b1b;
  border-top: 1px solid #333;
  border-bottom: 1px solid #333;
  color: #999;
  font-size: 17px;
  white-space: nowrap;
  button {
    width: 20px;
    height: 20px;
    border-radius: 3px;
    background-color: #3c3c3c;
    color: #ddd;
  }
`;

const OrderBook = styled.table`
  flex: 1;
  display: flex;
  min-height: 0;
  padding: 8px 0 5px;
  tbody {
    flex: 1;
    display: flex;
    flex-direction: column;
  }
  tr {
    flex: 1;
    display: flex;
    align-items: center;
    min-height: 0;
    padding: 0 7px 0 6px;
  }
  td {
    font-family: Roboto, ${CJK};
    font-size: 17px;
    font-weight: 700;
    line-height: 18px;
    text-align: right;
    color: #ccc;
  }
  .label {
    width: 60px;
    color: #888;
    font-family: ${CJK};
    font-weight: 400;
    text-align: left;
  }
  .price {
    width: 67px;
  }
  .arrow {
    display: flex;
    width: 11px;
    padding-left: 2px;
  }
  .volume {
    width: 71px;
  }
  .diff {
    flex: 1;
    color: #34e664;
    font-weight: 400;
    &.up {
      color: #ff5a5a;
    }
  }
  .power {
    padding: 0;
    align-items: stretch;
    td {
      width: 57%;
      padding-right: 60px;
      background-color: #17401f;
    }
    td:first-child {
      width: 43%;
      padding-right: 40px;
      background-color: #552323;
    }
  }
`;

const TickTable = styled.table`
  display: flex;
  height: 228px;
  padding-bottom: 2px;
  tbody {
    flex: 1;
    display: flex;
    flex-direction: column;
  }
  tr {
    flex: 1;
    display: flex;
    align-items: center;
  }
  td {
    font-family: Roboto, sans-serif;
    font-size: 17px;
    font-weight: 700;
    text-align: right;
    color: #ccc;
  }
  .time {
    width: 44px;
    color: #777;
    font-size: 15px;
    font-weight: 400;
    &.full {
      color: #aaa;
      font-size: 17px;
      font-weight: 700;
    }
  }
  .price {
    width: 81px;
    color: #34e664;
  }
  .arrow {
    display: flex;
    width: 12px;
    padding-left: 3px;
  }
  .volume {
    width: 77px;
    color: #34e664;
    &.up {
      color: #ff5a5a;
    }
  }
  .count {
    width: 44px;
  }
`;

const QuoteStyle = styled.aside`
  flex: none;
  width: 332px;
  display: flex;
  flex-direction: column;
  overflow: hidden;
  header {
    flex: none;
    display: flex;
    height: 90px;
    padding-left: 8px;
    border-bottom: 1px solid #333;
  }
  .prev,
  .next {
    align-self: flex-start;
    margin-top: 12px;
    border: 10px solid transparent;
  }
  .prev {
    border-left: none;
    border-right-color: #777;
  }
  .next {
    border-right: none;
    border-left-color: #777;
  }
  .stock {
    flex: none;
    width: 235px;
    padding-left: 20px;
  }
  .title {
    display: flex;
    align-items: center;
    gap: 6px;
    height: 44px;
  }
  .code {
    font-size: 20px;
  }
  h1 {
    margin: 0;
    color: #fafa96;
    font-size: 28px;
    line-height: 36px;
    font-weight: 500;
    white-space: nowrap;
  }
  .now {
    display: flex;
    align-items: center;
    gap: 20px;
    height: 34px;
    padding-left: 8px;
    color: #34e664;
  }
  .last {
    font-size: 31px;
    line-height: 34px;
    font-weight: 400;
    -webkit-text-stroke: 1px #34e664;
  }
  .change {
    display: flex;
    flex-direction: column;
    padding-top: 2px;
    font-family: Roboto, sans-serif;
    font-size: 18px;
    font-weight: 500;
    line-height: 21px;
    white-space: nowrap;
  }
  .tags {
    display: grid;
    grid-template-columns: 26px 26px;
    gap: 10px 6px;
    align-content: start;
    margin: 11px 0 0 20px;
  }
  .tag,
  .fav {
    height: 26px;
    background-color: #383838;
    color: #aaa;
  }
  .fav {
    grid-column: 1 / 3;
    width: 62px;
    height: 30px;
  }
  .columns {
    flex: 1;
    display: flex;
    min-height: 0;
  }
  .book_column {
    flex: none;
    display: flex;
    flex-direction: column;
    width: 270px;
    border-right: 1px solid #333;
  }
  .status,
  .ratio {
    flex: none;
    display: flex;
    align-items: center;
    height: 28px;
    padding: 0 7px 1px 6px;
    border-bottom: 1px solid #333;
    color: #888;
    font-size: 17px;
  }
  .status {
    justify-content: space-between;
    height: 29px;
    padding: 2px 7px 0 6px;
    b {
      color: #ccc;
      font-weight: 400;
    }
  }
  .first {
    width: 94px;
    margin-right: 8px;
    text-align: right;
  }
  .second {
    margin-left: auto;
  }
  .info_column {
    flex: 1;
    display: flex;
    flex-direction: column;
    min-width: 0;
    overflow: hidden;
    white-space: nowrap;
  }
  .tabs {
    flex: none;
    display: flex;
    height: 29px;
    background-color: #1b1b1b;
    border-bottom: 1px solid #333;
    color: #888;
    button {
      flex: none;
      width: 43px;
    }
    .active {
      background-color: #3c3c3c;
      color: #eee;
    }
  }
  .labels {
    flex: 1;
    display: flex;
    flex-direction: column;
    min-height: 0;
    padding: 5px 0 0 6px;
    color: #888;
    font-size: 17px;
    li {
      flex: 1;
      line-height: 18px;
    }
  }
  .alerts,
  .trades {
    flex: none;
    font-family: Roboto, sans-serif;
    font-size: 17px;
    font-weight: 700;
  }
  .alerts {
    padding-bottom: 2px;
    border-bottom: 1px solid #333;
    li {
      padding-left: 9px;
      line-height: 25px;
    }
  }
  .trades {
    display: grid;
    grid-template-rows: repeat(11, 1fr);
    height: 259px;
    padding: 0 0 12px 5px;
    color: #aaa;
    li {
      padding-left: 2px;
      line-height: 22px;
    }
    .selected {
      background-color: #18224a;
    }
  }
  .detail {
    flex: none;
    height: 27px;
    padding-left: 15px;
    background-color: #333;
    color: #ccc;
    text-align: left;
  }
`;

const Ticker = styled.footer`
  flex: none;
  display: flex;
  height: 27px;
  border-top: 1px solid #333;
  border-bottom: 1px solid #333;
`;

const Cell = styled.div`
  flex: 0 1 ${({ $width }) => $width}px;
  display: flex;
  align-items: center;
  justify-content: ${({ $spread }) => ($spread ? "space-between" : "center")};
  padding: ${({ $spread }) => ($spread ? "0 15px 0 20px" : "0")};
  border-right: 2px solid #2a2a2a;
  font-size: 17px;
  white-space: nowrap;
  color: ${({ $color }) => $color || "#aaa"};
  ${Num} {
    color: ${({ $color }) => $color || "#34e664"};
  }
  .drop {
    display: flex;
    align-items: center;
    gap: 8px;
    i {
      border: 6px solid transparent;
      border-top: 11px solid #34e664;
      border-bottom: none;
    }
  }
  .counts {
    display: flex;
    .up {
      color: #ff5a5a;
    }
    .flat {
      margin: 0 4px;
      padding: 0 4px;
      border-left: 1px solid #444;
      border-right: 1px solid #444;
      color: #ccc;
    }
  }
  .flow {
    margin-left: 12px;
  }
  &.last {
    flex: 1;
    justify-content: flex-start;
    padding-left: 20px;
    border-right: none;
  }
`;

const NewsStrip = styled.div`
  flex: none;
  display: flex;
  gap: 80px;
  height: 6px;
  padding-left: 322px;
  overflow: hidden;
  background-color: #1f1f1f;
  white-space: nowrap;
  .red {
    color: #ff5a5a;
  }
`;

export default App;
